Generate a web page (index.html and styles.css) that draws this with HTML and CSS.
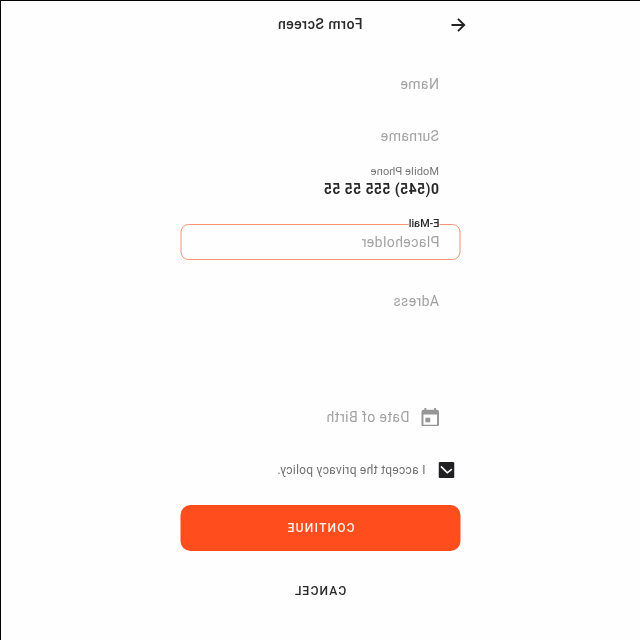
FILE: index.html
```html
<!DOCTYPE html>
<html lang="en">
<head>
<meta charset="utf-8">
<title>Form Screen</title>
<link rel="stylesheet" href="styles.css">
</head>
<body>
<main class="screen">
  <form class="form">
    <header class="header">
      <svg class="back" viewBox="0 0 16 16"><path d="M14.5 8H2M8 1.8L1.8 8L8 14.2"/></svg>
      <h1 class="title">Form Screen</h1>
    </header>
    <div class="field name"><span class="hint">Name</span></div>
    <div class="field surname"><span class="hint">Surname</span></div>
    <div class="field phone">
      <span class="label">Mobile Phone</span>
      <span class="value">0(545) 555 55 55</span>
    </div>
    <div class="field email">
      <span class="legend">E-Mail</span>
      <span class="hint placeholder">Placeholder</span>
    </div>
    <div class="field address"><span class="hint">Adress</span></div>
    <div class="field birth">
      <svg class="calendar" viewBox="0 0 18 20" preserveAspectRatio="none"><path fill-rule="evenodd" d="M3 0h2v2h8V0h2v2h1a2 2 0 0 1 2 2v14a2 2 0 0 1-2 2H2a2 2 0 0 1-2-2V4a2 2 0 0 1 2-2h1zM2 7v11h14V7zM9 10.500h5v5H9z"/></svg>
      <span class="hint date">Date of Birth</span>
    </div>
    <div class="policy">
      <svg class="check" viewBox="0 0 16 16"><rect width="16" height="16" rx="1.5"/><path d="M2.600 7.200L7.200 10.800L13.600 4.400"/></svg>
      <span class="accept">I accept the privacy policy.</span>
    </div>
    <div class="button">CONTINUE</div>
    <div class="cancel">CANCEL</div>
  </form>
</main>
</body>
</html>
```
FILE: styles.css
```css
* { box-sizing: border-box; }
body { margin: 0; background: #fefefe; font-family: Roboto, "Liberation Sans", sans-serif; }
.screen {
  height: 640px;
  overflow: hidden;
  border-top: 1px solid #000;
  border-right: 1px solid #000;
  transform: scaleX(-1);
}
.form { width: 280px; margin: 0 0 0 180px; display: flex; flex-direction: column; }
.header { height: 46px; position: relative; display: flex; align-items: center; justify-content: center; }
.back { position: absolute; left: -6.5px; top: 15.5px; width: 16px; height: 16px; fill: none; stroke: #222; stroke-width: 1.9; }
.title { margin: 0; font-size: 14px; font-weight: 500; letter-spacing: 0.5px; color: #292929; }
.field { padding-left: 21px; display: flex; align-items: center; white-space: nowrap; }
.hint { font-size: 14px; letter-spacing: 0.4px; color: #a2a2a2; }
.name { height: 74px; }
.surname { height: 30px; }
.phone { height: 73px; flex-direction: column; align-items: flex-start; padding-top: 14px; }
.label { font-size: 11px; line-height: 14px; letter-spacing: 0.1px; color: #757575; }
.value { margin-top: -1px; font-size: 14px; line-height: 22px; font-weight: 700; letter-spacing: 0.43px; color: #292929; }
.email { height: 36px; border: 1.5px solid #f79275; border-radius: 8px; position: relative; padding: 0 0 1px 20px; transform: translateX(-0.5px); }
.legend { position: absolute; left: 20px; top: -8px; background: #fefefe; font-size: 11px; line-height: 13px; font-weight: 500; letter-spacing: -0.05px; color: #292929; }
.address { height: 83px; padding-bottom: 2px; }
.birth { height: 119px; gap: 12px; align-items: flex-end; padding-bottom: 37px; }
.calendar { width: 17.5px; height: 18.5px; margin-bottom: -1px; fill: #969696; }
.policy { height: 16px; margin-bottom: 27px; padding-left: 6px; display: flex; align-items: center; gap: 13px; transform: translateX(-0.5px); }
.check { width: 16px; height: 16px; fill: #202022; }
.check path { fill: none; stroke: #fff; stroke-width: 1.6; }
.accept { font-size: 12px; letter-spacing: 0.3px; color: #707070; white-space: nowrap; }
.button { height: 46px; border-radius: 10px; background: #ff4d1d; color: #fff0e5; display: flex; align-items: center; justify-content: center; font-size: 12px; font-weight: 500; letter-spacing: 1.2px; transform: translateX(-0.5px); }
.cancel { height: 80px; display: flex; align-items: center; justify-content: center; font-size: 12px; font-weight: 500; letter-spacing: 1.2px; color: #292929; }
```
